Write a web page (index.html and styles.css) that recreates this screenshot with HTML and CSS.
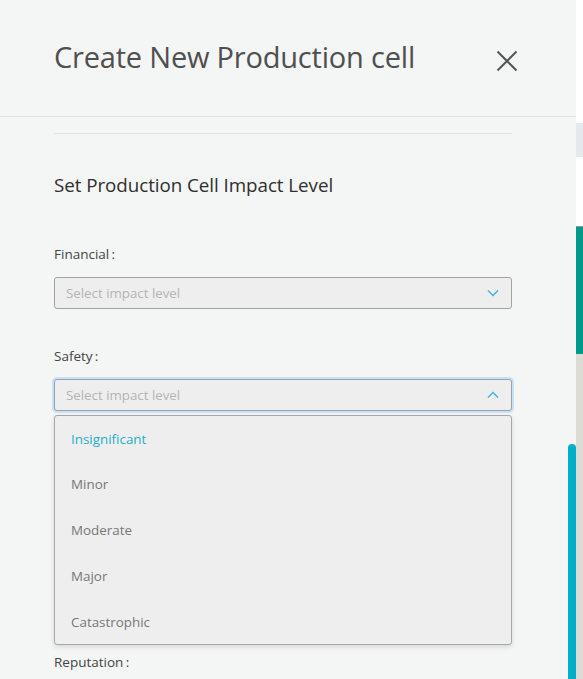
FILE: index.html
```html
<!DOCTYPE html>
<html lang="en">
<head>
<meta charset="utf-8">
<title>Create New Production cell</title>
<link rel="stylesheet" href="styles.css">
</head>
<body>
<div class="page">
  <div class="panel">
    <header class="panel-header">
      <h1 class="panel-title">Create New Production cell</h1>
      <button class="close-btn" aria-label="Close">
        <svg width="22" height="22" viewBox="0 0 22 22"><path d="M1.5 1.5 L20.5 20.5 M20.5 1.5 L1.5 20.5" stroke="#555" stroke-width="2" fill="none"/></svg>
      </button>
    </header>
    <div class="panel-body">
      <hr class="divider">
      <h2 class="section-title">Set Production Cell Impact Level</h2>

      <div class="field">
        <label class="field-label">Financial&thinsp;:</label>
        <div class="select">
          <span class="placeholder">Select impact level</span>
          <svg class="chev" width="12" height="8" viewBox="0 0 12 8"><path d="M1 1.5 L6 6.5 L11 1.5" stroke="#3ab7d3" stroke-width="1.4" fill="none"/></svg>
        </div>
      </div>

      <div class="field">
        <label class="field-label">Safety&thinsp;:</label>
        <div class="select-wrap">
          <div class="select focused">
            <span class="placeholder">Select impact level</span>
            <svg class="chev" width="12" height="8" viewBox="0 0 12 8"><path d="M1 6.5 L6 1.5 L11 6.5" stroke="#3ab7d3" stroke-width="1.4" fill="none"/></svg>
          </div>
          <ul class="menu">
            <li class="menu-item active">Insignificant</li>
            <li class="menu-item">Minor</li>
            <li class="menu-item">Moderate</li>
            <li class="menu-item">Major</li>
            <li class="menu-item">Catastrophic</li>
          </ul>
        </div>
      </div>

      <div class="field covered">
        <label class="field-label">Environmental&thinsp;:</label>
        <div class="select">
          <span class="placeholder">Select impact level</span>
        </div>
      </div>

      <div class="field covered">
        <label class="field-label">Operational&thinsp;:</label>
        <div class="select">
          <span class="placeholder">Select impact level</span>
        </div>
      </div>

      <div class="field">
        <label class="field-label">Reputation&thinsp;:</label>
        <div class="select">
          <span class="placeholder">Select impact level</span>
        </div>
      </div>
    </div>
    <div class="scrollbar"></div>
  </div>
  <div class="backdrop">
    <div class="bd bd-white-top"></div>
    <div class="bd bd-grey"></div>
    <div class="bd bd-white"></div>
    <div class="bd bd-teal"></div>
    <div class="bd bd-stone"></div>
  </div>
</div>
</body>
</html>
```
FILE: styles.css
```css
html, body {
  margin: 0;
  padding: 0;
  height: 100%;
  overflow: hidden;
}
body {
  font-family: "Open Sans", "Noto Sans", sans-serif;
  background: #f4f5f5;
}
.page {
  display: flex;
  height: 679px;
  overflow: hidden;
}
.panel {
  position: relative;
  width: 576px;
  flex: none;
  background: #f4f5f5;
  overflow: hidden;
}
.panel-header {
  height: 116px;
  border-bottom: 1px solid #e2e4e4;
  display: flex;
  align-items: center;
  justify-content: space-between;
  padding: 0 58px 0 54px;
  box-sizing: content-box;
}
.panel-title {
  margin: 0;
  font-size: 29px;
  font-weight: 400;
  color: #4f4f4f;
  letter-spacing: -0.2px;
  position: relative;
  top: -2px;
}
.close-btn {
  border: 0;
  background: none;
  padding: 0;
  width: 22px;
  height: 22px;
  display: flex;
  position: relative;
  top: 3px;
}
.panel-body {
  padding: 0 64px 0 54px;
}
.divider {
  margin: 16px 0 0;
  border: 0;
  border-top: 1px solid #e2e4e4;
  height: 0;
}
.section-title {
  margin: 39px 0 0;
  font-size: 18.8px;
  line-height: 24px;
  font-weight: 400;
  color: #2f2f2f;
  letter-spacing: -0.05px;
}
.field {
  margin-top: 47px;
}
.field + .field {
  margin-top: 37px;
}
.field.covered {
  visibility: hidden;
}
.field-label {
  display: block;
  font-size: 13.5px;
  line-height: 20px;
  color: #444;
}
.select-wrap {
  position: relative;
  margin-top: 13px;
}
.select {
  margin-top: 13px;
  height: 32px;
  box-sizing: border-box;
  border: 1px solid #a2a2a2;
  border-radius: 3px;
  background: #eeeeee;
  display: flex;
  align-items: center;
  justify-content: space-between;
  padding: 0 12px 0 11px;
}
.select-wrap .select {
  margin-top: 0;
}
.select.focused {
  border-color: #96a4b0;
  box-shadow: 0 0 0 2px #c8e1f6;
}
.placeholder {
  font-size: 13.3px;
  color: #b4b4b4;
}
.chev {
  display: block;
}
.menu {
  position: absolute;
  z-index: 5;
  left: 0;
  right: 0;
  top: 36px;
  margin: 0;
  padding: 0;
  list-style: none;
  background: #eeeeee;
  border: 1px solid #a8a8a8;
  border-radius: 3px;
  box-shadow: 0 2px 5px rgba(0, 0, 0, 0.12);
  box-sizing: border-box;
  height: 230px;
}
.menu-item {
  height: 46px;
  display: flex;
  align-items: center;
  padding-left: 16px;
  font-size: 13.4px;
  color: #777;
}
.menu-item:first-child {
  height: 45px;
}
.menu-item.active {
  color: #1db1c9;
}
.scrollbar {
  position: absolute;
  right: 0;
  top: 444px;
  width: 8px;
  height: 300px;
  background: #00b0c6;
  border-radius: 4px 4px 0 0;
}
.backdrop {
  flex: 1;
  display: flex;
  flex-direction: column;
}
.bd { flex: none; }
.bd-white-top { height: 123px; background: #ffffff; }
.bd-grey { height: 34px; background: #e5e8ec; }
.bd-white { height: 69px; background: #ffffff; }
.bd-teal { height: 128px; background: #009a8b; border-top: 1px solid #8a9a98; box-sizing: border-box; }
.bd-stone { flex: 1; background: #dcdcd5; }
```
